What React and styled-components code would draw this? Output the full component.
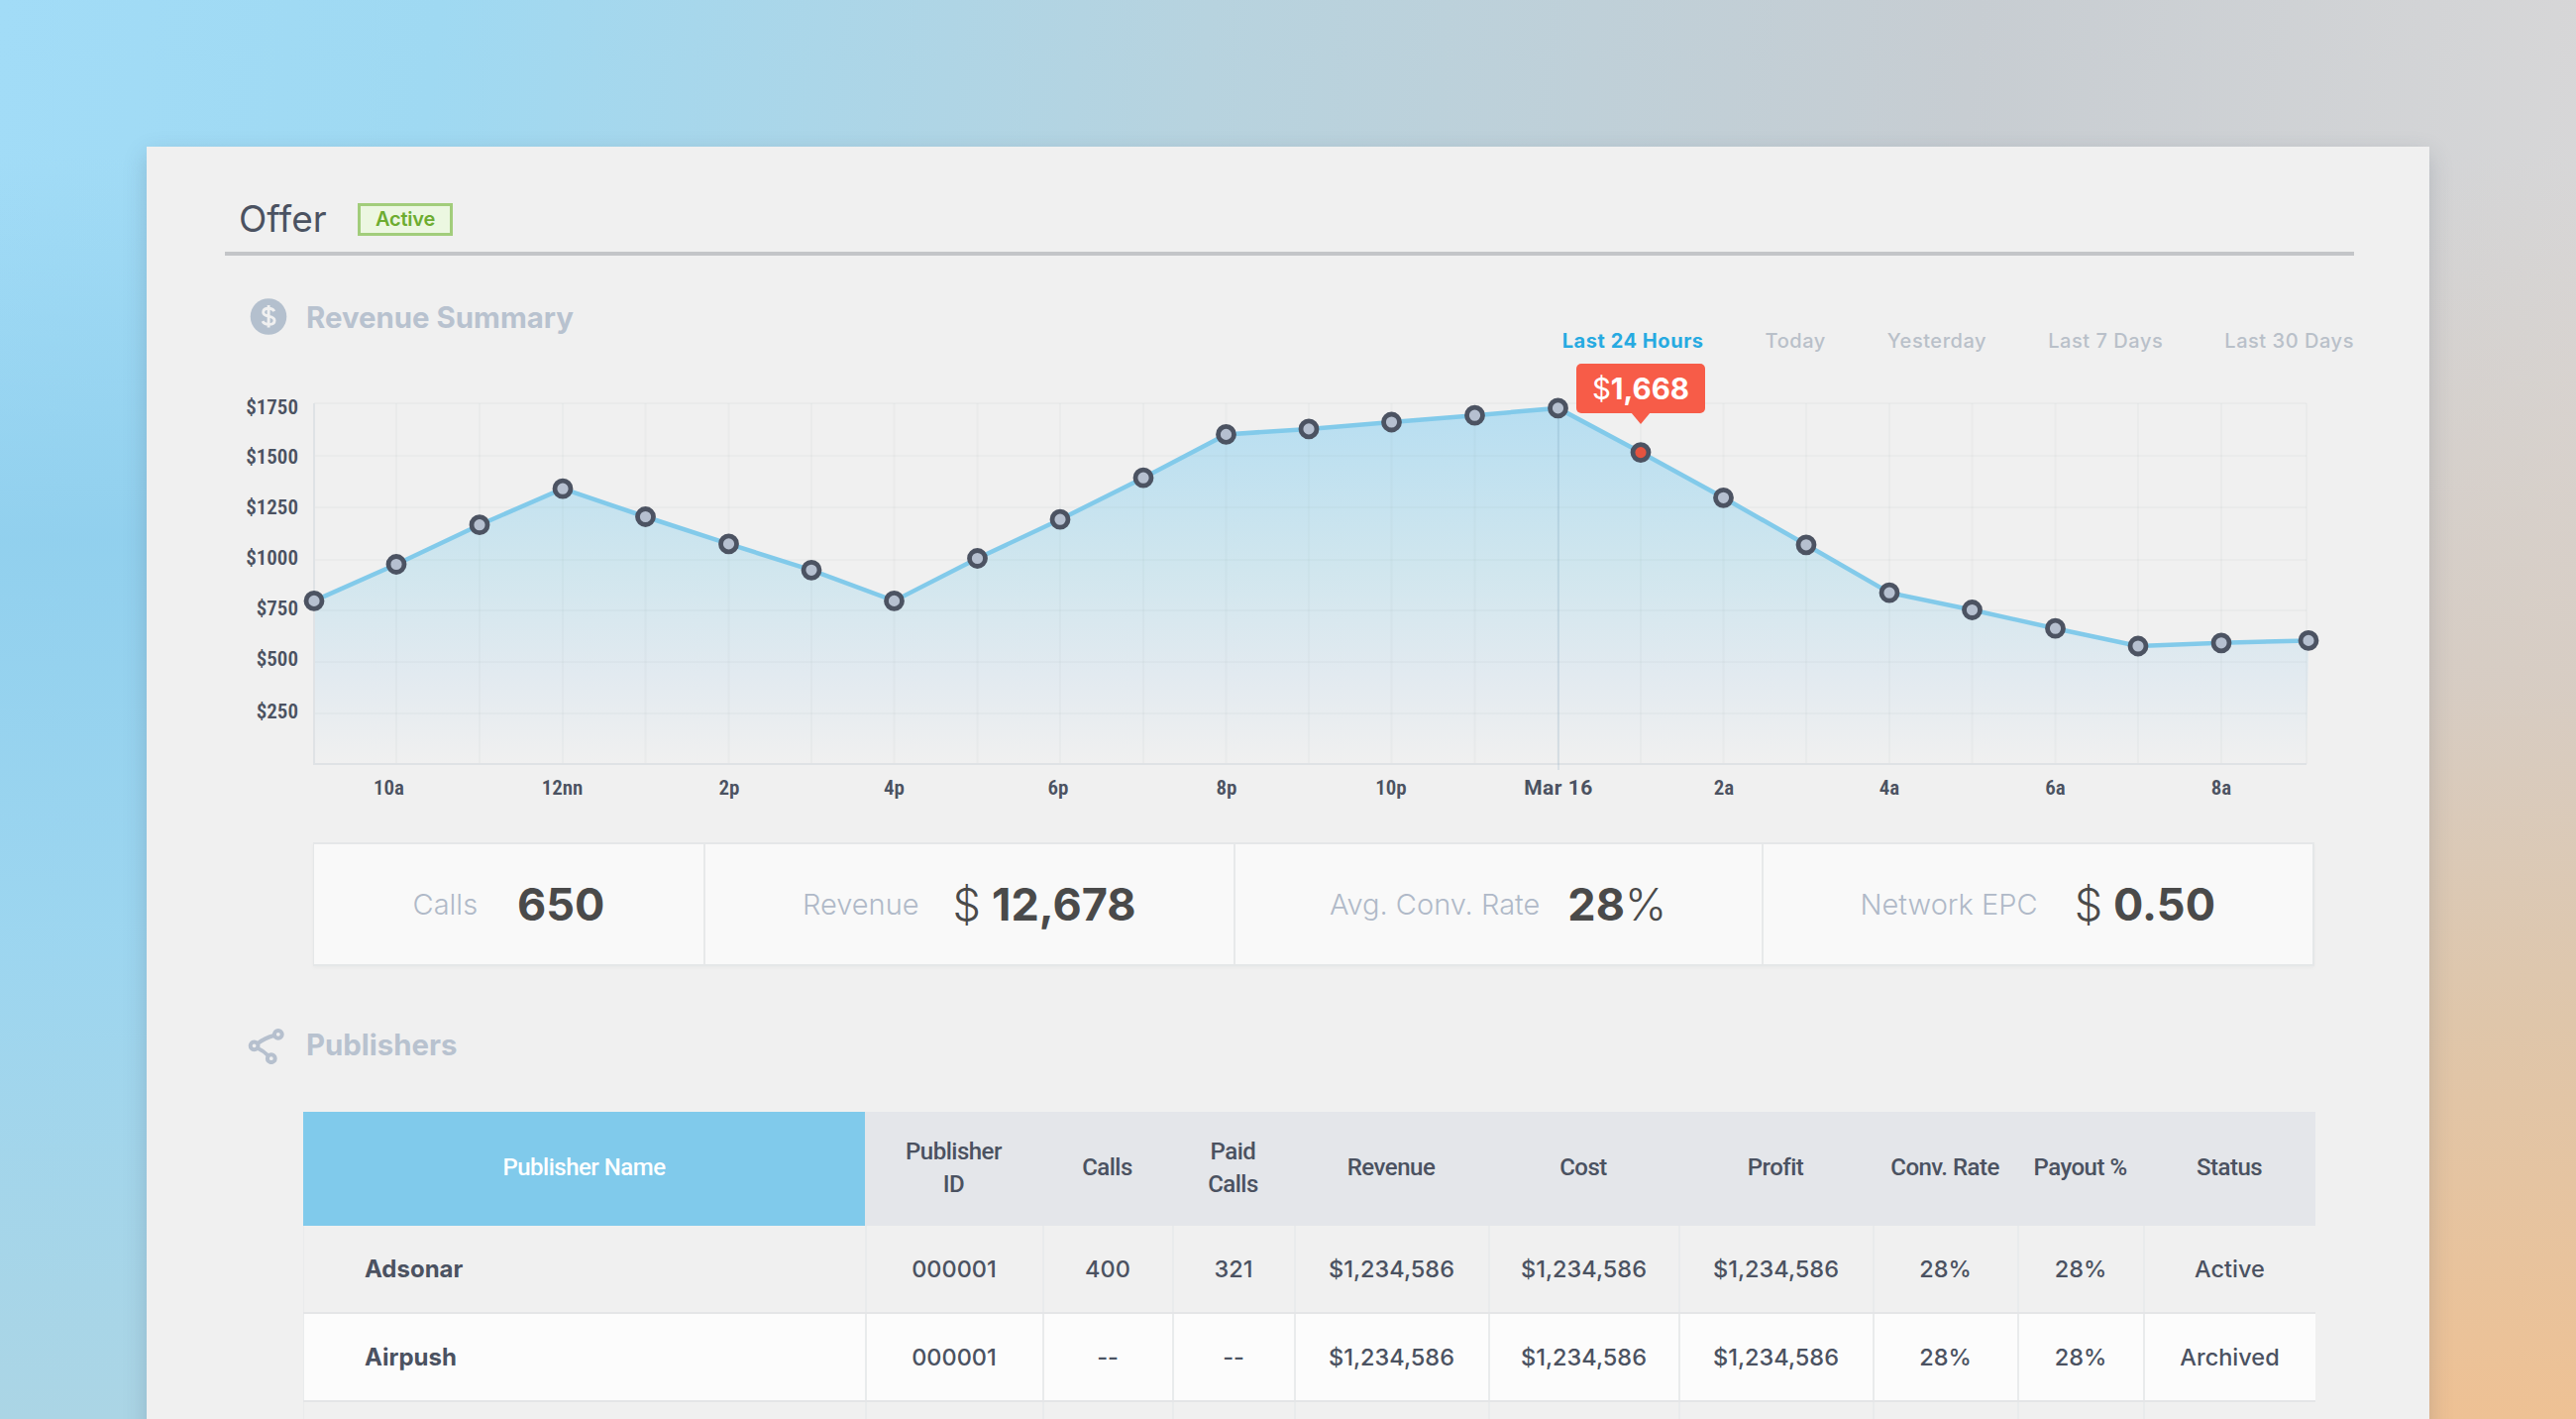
import React from 'react';
import styled, { createGlobalStyle } from 'styled-components';

const GlobalStyle = createGlobalStyle`
  * {
    box-sizing: border-box;
  }
  body {
    margin: 0;
    font-family: Inter, Roboto, sans-serif;
    color: #4b5261;
    overflow: hidden;
  }
`;

const hours = [
  [317, 606.4], [400, 569.5], [484, 529.7], [568, 493.2], [651.5, 521.5],
  [735.5, 548.9], [819, 575.3], [902.5, 606.4], [986.5, 563.5], [1070, 524.2],
  [1154, 482.2], [1237.5, 438.4], [1321, 432.9], [1404.5, 426], [1488.5, 419.2],
  [1572.5, 411.9], [1656, 456.6], [1739.5, 502.3], [1823, 549.8], [1907, 598.2],
  [1990.5, 615.5], [2074.5, 634.2], [2158, 652], [2242, 648.8], [2330, 646.4],
];

const amounts = [
  ['$1750', 410], ['$1500', 460.5], ['$1250', 511.5], ['$1000', 562],
  ['$750', 613], ['$500', 664], ['$250', 717],
];

const times = [
  ['10a', 392.5], ['12nn', 567.5], ['2p', 736], ['4p', 902.5], ['6p', 1068],
  ['8p', 1238], ['10p', 1404], ['Mar 16', 1573], ['2a', 1740], ['4a', 1907],
  ['6a', 2074.5], ['8a', 2242],
];

const gridRows = [407, 460, 512, 565, 616, 668, 720];
const ACTIVE_HOUR = 16;

const tabs = ['Last 24 Hours', 'Today', 'Yesterday', 'Last 7 Days', 'Last 30 Days'];

const stats = [
  { label: 'Calls', value: '650', gap: 40 },
  { label: 'Revenue', prefix: '$', value: '12,678', gap: 34 },
  { label: 'Avg. Conv. Rate', value: '28', suffix: '%', gap: 28 },
  { label: 'Network EPC', prefix: '$', value: '0.50', gap: 37 },
];

const columns = [
  'Publisher ID', 'Calls', 'Paid Calls', 'Revenue', 'Cost',
  'Profit', 'Conv. Rate', 'Payout %', 'Status',
];

const rows = [
  ['Adsonar', '000001', '400', '321', '$1,234,586', '$1,234,586', '$1,234,586', '28%', '28%', 'Active'],
  ['Airpush', '000001', '--', '--', '$1,234,586', '$1,234,586', '$1,234,586', '28%', '28%', 'Archived'],
  ['', '', '', '', '', '', '', '', '', ''],
];

const DollarIcon = () => (
  <Icon viewBox='0 0 40 40'>
    <circle cx='21' cy='19.5' r='18.3' fill='#b4c0ce' />
    <path
      d='M26.800 14.100c-1-1.900-3-2.800-5.600-2.800-3.200 0-5.500 1.500-5.500 3.900 0 5.400 11.400 2.500 11.400 8.200 0 2.500-2.500 4-5.900 4-2.900 0-5.200-1.100-6.200-3.200M21.100 8v22.500'
      fill='none'
      stroke='#f0f0f0'
      strokeWidth='2.9'
    />
  </Icon>
);

const ShareIcon = () => (
  <Icon viewBox='0 0 40 40'>
    <g fill='none' stroke='#b6c0ce' strokeWidth='4'>
      <path d='M26.500 11C20 12.800 14.500 15.500 10.500 18.800M9.500 23.500C14 25.500 18 28.500 21.300 31.800' />
      <circle cx='30.8' cy='9.8' r='3.9' />
      <circle cx='6.6' cy='21.3' r='3.9' />
      <circle cx='23.8' cy='34.2' r='3.9' />
    </g>
  </Icon>
);

const RevenueChart = () => {
  const line = hours.map((p) => p.join(',')).join(' ');
  const [tipX] = hours[ACTIVE_HOUR];

  return (
    <Chart viewBox='227 366 2149 450'>
      <defs>
        <linearGradient id='area' gradientUnits='userSpaceOnUse' x1='0' y1='411' x2='0' y2='771'>
          <stop offset='0' stopColor='#b7def1' />
          <stop offset='0.45' stopColor='#d0e6ee' />
          <stop offset='0.75' stopColor='#e2eaf0' />
          <stop offset='1' stopColor='#f0f0f0' />
        </linearGradient>
      </defs>
      <polygon points={`317,771 ${line} 2328,771`} fill='url(#area)' />
      <g stroke='#6e7c8c' strokeOpacity='0.04' strokeWidth='2'>
        {gridRows.map((y) => (
          <path key={y} d={`M317 ${y}H2328`} />
        ))}
        {hours.slice(1).map(([x]) => (
          <path key={x} d={`M${Math.min(x, 2328)} 407V771`} />
        ))}
      </g>
      <path d='M317 407V771H2328' fill='none' stroke='#dfe2e5' strokeWidth='2' />
      <path d='M1573 411V777' stroke='#5f8cae' strokeOpacity='0.2' strokeWidth='1.5' />
      <polyline points={line} fill='none' stroke='#82caea' strokeWidth='4.5' />
      {hours.map(([x, y], i) => (
        <circle
          key={x}
          cx={x}
          cy={y}
          r='8'
          fill={i === ACTIVE_HOUR ? '#e5533f' : '#b6c0d0'}
          stroke='#4c5362'
          strokeWidth='4.8'
        />
      ))}
      {amounts.map(([text, y]) => (
        <AxisText key={text} x='301' y={y + 7.5} textAnchor='end'>
          {text}
        </AxisText>
      ))}
      {times.map(([text, x]) => (
        <AxisText key={text} x={x} y='801.5' textAnchor='middle' $strong={text === 'Mar 16'}>
          {text}
        </AxisText>
      ))}
      <rect x='1591' y='367' width='130' height='50' rx='5' fill='#f75c48' />
      <path d={`M${tipX - 10} 416H${tipX + 10}L${tipX} 428Z`} fill='#f75c48' />
      <TipText x={tipX} y='402.5' textAnchor='middle'>
        <tspan fontWeight='400'>$</tspan>1,668
      </TipText>
    </Chart>
  );
};

const App = () => {
  return (
    <Backdrop>
      <GlobalStyle />
      <Card>
        <Header>
          <Title>Offer</Title>
          <Badge>Active</Badge>
        </Header>
        <SummaryBar>
          <SectionTitle>
            <DollarIcon />
            Revenue Summary
          </SectionTitle>
          <Tabs>
            {tabs.map((tab, i) => (
              <Tab key={tab} $active={i === 0}>
                {tab}
              </Tab>
            ))}
          </Tabs>
        </SummaryBar>
        <RevenueChart />
        <Stats>
          {stats.map((s) => (
            <Stat key={s.label} $gap={s.gap}>
              <StatLabel>{s.label}</StatLabel>
              <StatValue>
                {s.prefix && <Unit $spaced>{s.prefix}</Unit>}
                {s.value}
                {s.suffix && <Unit>{s.suffix}</Unit>}
              </StatValue>
            </Stat>
          ))}
        </Stats>
        <PublishersTitle>
          <ShareIcon />
          Publishers
        </PublishersTitle>
        <Table>
          <HeadRow>
            <NameHead>Publisher Name</NameHead>
            {columns.map((c) => (
              <HeadCell key={c} $narrow={c === 'Publisher ID' || c === 'Paid Calls'}>
                {c}
              </HeadCell>
            ))}
          </HeadRow>
          {rows.map(([name, ...cells], i) => (
            <Row key={i} $light={i % 2 === 1}>
              <NameCell>{name}</NameCell>
              {cells.map((c, j) => (
                <Cell key={j}>{c}</Cell>
              ))}
            </Row>
          ))}
        </Table>
      </Card>
    </Backdrop>
  );
};

export default App;

const Backdrop = styled.div`
  height: 1432px;
  padding: 148px 148px 0;
  overflow: hidden;
  background:
    linear-gradient(180deg, rgba(216, 200, 190, 0) 11%, rgba(215, 203, 192, 0.85) 48%, #dfc6aa 72%, #eec194 100%) right / 300px 100% no-repeat,
    linear-gradient(180deg, rgba(144, 207, 237, 0) 11%, rgba(144, 207, 237, 0.9) 38%, rgba(156, 213, 239, 0.9) 66%, #abd5e5 100%) left / 200px 100% no-repeat,
    linear-gradient(97deg, #a2dcf7 0%, #9fd9f2 16%, #b7d3df 44%, #c7cdd2 72%, #dbd9d9 100%);
`;

const Card = styled.div`
  height: 1400px;
  padding: 0 76px 0 79px;
  background: #f0f0f0;
  box-shadow: 0 8px 22px rgba(60, 75, 95, 0.22);
`;

const Header = styled.div`
  display: flex;
  align-items: center;
  height: 110px;
  padding: 40px 0 0 14px;
  border-bottom: 4px solid #c3c5c8;
`;

const Title = styled.div`
  width: 120px;
  font-size: 37px;
  line-height: 40px;
`;

const Badge = styled.div`
  width: 96px;
  height: 33px;
  border: 3px solid #a2cd7b;
  background: #ecf7e1;
  color: #6dac30;
  font-size: 20px;
  font-weight: 600;
  letter-spacing: -0.2px;
  line-height: 26px;
  text-align: center;
`;

const SummaryBar = styled.div`
  display: flex;
  justify-content: space-between;
  height: 108px;
  padding-top: 45px;
`;

const SectionTitle = styled.div`
  display: flex;
  gap: 19px;
  padding-left: 23px;
  font-size: 29.4px;
  font-weight: 700;
  line-height: 36px;
  color: #b8c2cf;
`;

const PublishersTitle = styled(SectionTitle)`
  margin-top: 62px;
`;

const Icon = styled.svg`
  width: 40px;
  height: 40px;
  margin-top: -3px;
`;

const Tabs = styled.div`
  display: flex;
  gap: 62px;
  padding-top: 29px;
`;

const Tab = styled.div`
  font-size: 20px;
  line-height: 24px;
  letter-spacing: 0.55px;
  font-weight: ${(p) => (p.$active ? 700 : 500)};
  color: ${(p) => (p.$active ? '#27aae1' : '#b9c0c9')};
`;

const Chart = styled.svg`
  display: block;
  width: 2149px;
  height: 450px;
`;

const AxisText = styled.text`
  font-family: Roboto, sans-serif;
  font-size: 21px;
  font-weight: ${(p) => (p.$strong ? 700 : 600)};
  font-stretch: ${(p) => (p.$strong ? 'normal' : 'semi-condensed')};
  letter-spacing: ${(p) => (p.$strong ? '0.5px' : 0)};
  fill: #4b5261;
`;

const TipText = styled.text`
  font-size: 29.5px;
  font-weight: 700;
  fill: #fff;
`;

const Stats = styled.div`
  display: grid;
  grid-template-columns: 393px 534.5px 533px 556.5px;
  width: 2020px;
  height: 125px;
  margin: 34px 0 0 89px;
  border: 2px solid #e5e7e8;
  border-left-width: 1px;
  background: #f9f9f9;
  box-shadow: 0 2px 4px rgba(0, 0, 0, 0.03);
`;

const Stat = styled.div`
  display: flex;
  align-items: center;
  justify-content: center;
  gap: ${(p) => p.$gap}px;
  & + & {
    border-left: 2px solid #e7e9ea;
  }
`;

const StatLabel = styled.span`
  font-size: 29px;
  font-weight: 300;
  color: #b0b9c8;
`;

const StatValue = styled.span`
  font-size: 45px;
  font-weight: 700;
  color: #4a4a4a;
`;

const Unit = styled.span`
  font-weight: 300;
  margin-right: ${(p) => (p.$spaced ? 11 : 0)}px;
`;

const Table = styled.div`
  width: 2031px;
  margin: 48px 0 0 79px;
`;

const Row = styled.div`
  display: grid;
  grid-template-columns: 567px 179px 131px 123px 196px 192px 196px 146px 127px 174px;
  height: 89px;
  border-bottom: 2px solid #e4e5e7;
  background: ${(p) => (p.$light ? '#fcfcfc' : '#f0f0f0')};
`;

const HeadRow = styled(Row)`
  height: 115px;
  border: 0;
  background: #e4e6ea;
`;

const HeadCell = styled.div`
  display: flex;
  align-items: center;
  justify-content: center;
  padding: 0 ${(p) => (p.$narrow ? 30 : 0)}px 2px;
  font-family: Roboto, sans-serif;
  font-size: 24px;
  font-weight: 500;
  letter-spacing: -0.5px;
  line-height: 33px;
  text-align: center;
`;

const NameHead = styled(HeadCell)`
  background: #80caeb;
  color: #fff;
`;

const Cell = styled.div`
  display: flex;
  align-items: center;
  justify-content: center;
  border-left: 2px solid #e9ebec;
  padding-right: 1px;
  font-size: 23.5px;
  font-weight: 500;
`;

const NameCell = styled(Cell)`
  justify-content: flex-start;
  padding-left: 61px;
  border-left-width: 1px;
  font-size: 24px;
  font-weight: 700;
`;
